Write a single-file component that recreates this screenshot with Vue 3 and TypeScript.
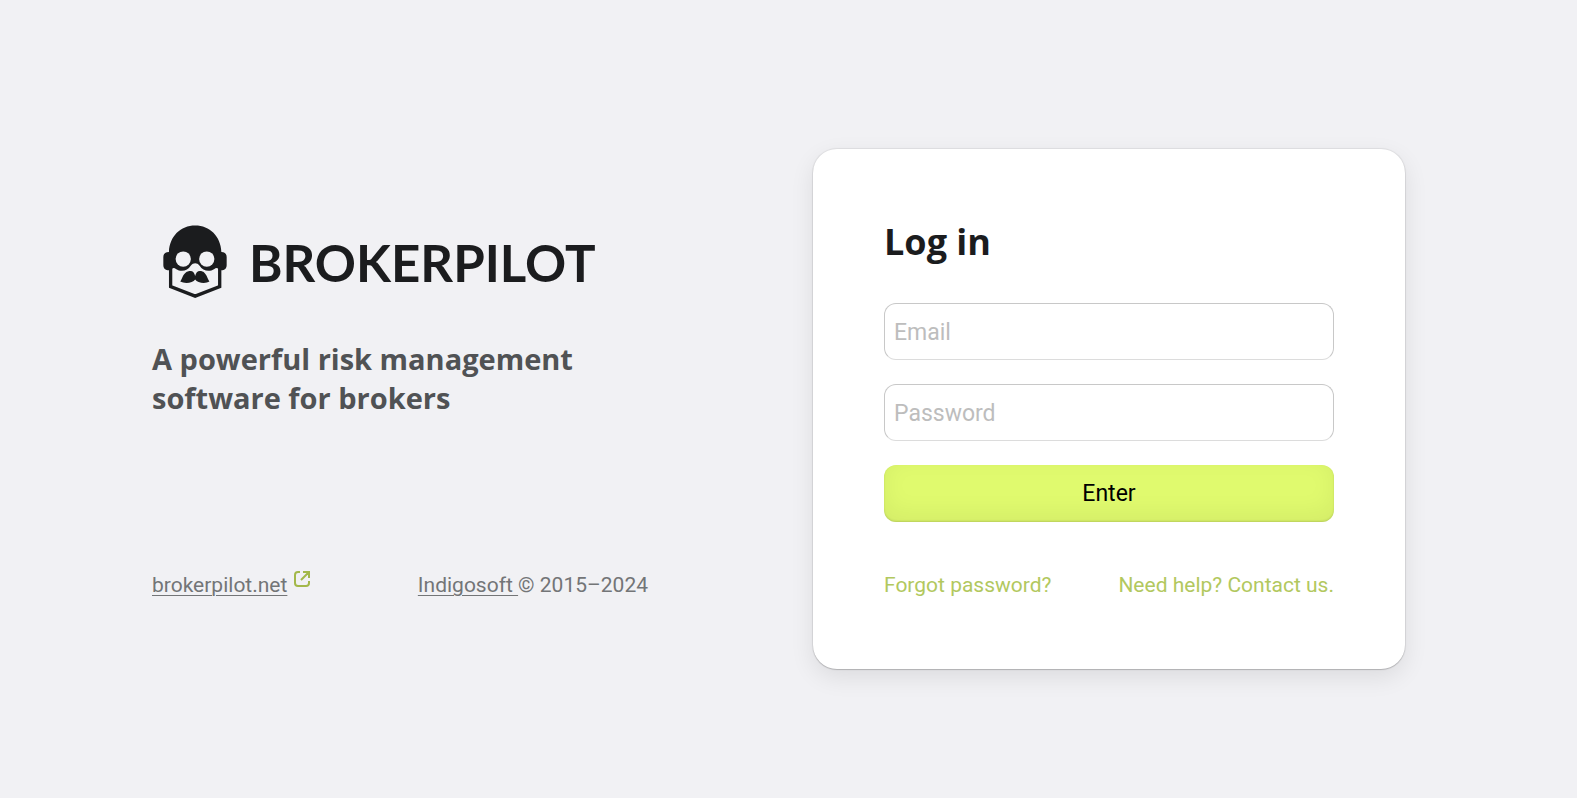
<script setup lang="ts">
import { ref } from 'vue'

const email = ref('')
const password = ref('')
</script>

<template>
  <main class="page">
    <section class="intro">
      <div class="brand">
        <svg class="brand-mark" viewBox="39 29 193 219" aria-hidden="true">
          <path
            fill="#1b1c1e"
            d="M57 110C59 62 92 30 136 30s77 32 79 80c10 0 16 6 16 15v24c0 10-6 16-16 16-4 0-7-2-9-5-4-3-8-3-12 1-16 11-36 5-44-9-4-6-10-8-14-8s-10 2-14 8c-8 14-28 20-44 9-4-4-8-4-12-1-2 3-5 5-9 5-11 0-17-6-17-16v-24c0-9 6-15 17-15z"
          />
          <circle cx="100" cy="131" r="23" fill="#f1f1f4" />
          <circle cx="171" cy="131" r="23" fill="#f1f1f4" />
          <path d="M62 155v59l74 29 74-29v-59" fill="none" stroke="#1b1c1e" stroke-width="10" />
          <path
            fill="#1b1c1e"
            d="M136 182c-2-9-7-15-14-15-12 0-18 7-22 14-3 6-5 13-9 18 13 7 38 5 45-6 7 11 32 13 43 6-4-5-6-12-9-18-4-7-8-14-20-14-7 0-12 6-14 15z"
          />
        </svg>
        <span class="brand-name">BROKERPILOT</span>
      </div>
      <p class="tagline">A powerful risk management software for brokers</p>
      <footer class="credits">
        <span class="site">
          <a class="credit-link" href="#">brokerpilot.net</a>
          <svg class="external" viewBox="0 0 16 16" aria-hidden="true">
            <path
              d="M6 1H4a3 3 0 0 0-3 3v8a3 3 0 0 0 3 3h8a3 3 0 0 0 3-3v-2M9 1h6v6M15 1 7 9"
              fill="none"
              stroke="#a3b84a"
              stroke-width="2"
            />
          </svg>
        </span>
        <span><a class="credit-link" href="#">Indigosoft&nbsp;</a>© 2015–2024</span>
      </footer>
    </section>

    <form class="card" @submit.prevent>
      <h1 class="title">Log in</h1>
      <div class="fields">
        <input v-model="email" class="field" type="email" placeholder="Email" aria-label="Email" />
        <input v-model="password" class="field" type="password" placeholder="Password" aria-label="Password" />
        <button class="submit" type="submit">Enter</button>
      </div>
      <nav class="links">
        <a href="#">Forgot password?</a>
        <a href="#">Need help? Contact us.</a>
      </nav>
    </form>
  </main>
</template>

<style>
body {
  margin: 0;
  background: #f1f1f4;
}
</style>

<style scoped>
.page {
  box-sizing: border-box;
  min-height: 100vh;
  padding: 20px 172px 0 152px;
  display: flex;
  align-items: center;
  justify-content: space-between;
  gap: 48px;
  background: #f1f1f4;
  font-family: Roboto, "Liberation Sans", sans-serif;
}

.intro {
  box-sizing: border-box;
  flex: 0 1 496px;
  min-height: 520px;
  padding: 76px 0 70px;
  display: flex;
  flex-direction: column;
}

.brand {
  display: flex;
  align-items: flex-start;
  gap: 22px;
  padding-left: 11px;
}

.brand-mark {
  width: 64px;
  height: 73px;
  flex: none;
}

.brand-name {
  color: #1b1c1e;
  font-family: Lato, "Open Sans", sans-serif;
  font-size: 51px;
  font-weight: 700;
  line-height: 76px;
}

.tagline {
  margin: 38px 0 0;
  color: #505254;
  font-family: "Open Sans", "Noto Sans", sans-serif;
  font-size: 29px;
  font-weight: 700;
  line-height: 39px;
}

.credits {
  margin-top: auto;
  display: flex;
  justify-content: space-between;
  color: #737577;
  font-size: 21px;
  line-height: 28px;
}

.site {
  display: flex;
  gap: 7px;
}

.credit-link {
  color: inherit;
  text-decoration: underline;
  text-decoration-thickness: 1px;
  text-underline-offset: 3px;
}

.external {
  width: 16px;
  height: 16px;
}

.card {
  box-sizing: border-box;
  flex: 0 1 592px;
  padding: 72px 71px;
  border-radius: 24px;
  background: #fff;
  box-shadow:
    0 0 1px 1px rgba(0, 0, 0, 0.07),
    0 1px 1px rgba(0, 0, 0, 0.16),
    0 8px 24px rgba(0, 0, 0, 0.09);
}

.title {
  margin: 0 0 40px;
  color: #1b1c1e;
  font-family: "Open Sans", "Noto Sans", sans-serif;
  font-size: 36px;
  font-weight: 700;
  line-height: 42px;
}

.fields {
  display: grid;
  gap: 24px;
}

.field,
.submit {
  box-sizing: border-box;
  width: 100%;
  height: 57px;
  border-radius: 12px;
  font-family: inherit;
  font-size: 23px;
}

.field {
  padding: 2px 9px 0;
  border: 1px solid #c8c8c8;
  border-bottom-color: #dcdcdc;
  background: #fff;
  color: #1b1c1e;
}

.field::placeholder {
  color: #bdbdbd;
  opacity: 1;
}

.submit {
  border: 0;
  background: #e0fa6e;
  box-shadow:
    inset 0 -1px 2px rgba(0, 0, 0, 0.14),
    inset 0 -8px 24px rgba(0, 0, 0, 0.06);
  color: #000;
}

.links {
  margin-top: 51px;
  display: flex;
  justify-content: space-between;
  font-size: 21px;
  line-height: 24px;
}

.links a {
  color: #b2c85e;
  text-decoration: none;
}
</style>
